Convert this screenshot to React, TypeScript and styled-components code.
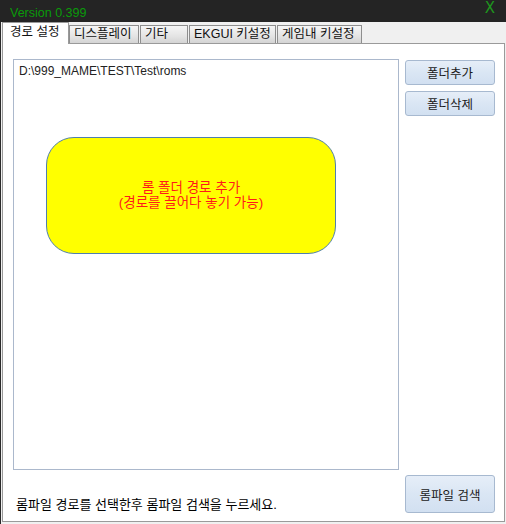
import styled, { createGlobalStyle } from 'styled-components';

const GlobalStyle = createGlobalStyle`
  html, body {
    margin: 0;
    padding: 0;
    background: #f0f0f0;
  }
  body {
    font-family: "Liberation Sans", "Noto Sans CJK KR", sans-serif;
    font-size: 12px;
  }
`;

const Window = styled.div`
  width: 506px;
  height: 524px;
  box-sizing: border-box;
  display: flex;
  flex-direction: column;
  background: #f0f0f0;
  border-left: 1px solid #2a2a2a;
`;

const TitleBar = styled.div`
  height: 22px;
  flex: none;
  display: flex;
  align-items: flex-start;
  justify-content: space-between;
  background: #242424;
  padding: 0 10px 0 10px;
  margin-left: -1px;
  color: #0a9a0a;
`;

const Version = styled.span`
  font-size: 12.5px;
  line-height: 14px;
  padding-top: 6px;
`;

const CloseX = styled.span`
  font-size: 15px;
  line-height: 15px;
  font-family: "DejaVu Sans", sans-serif;
  padding-top: 1px;
  margin-right: 1px;
  color: #1e961e;
`;

const TabStrip = styled.div`
  height: 21px;
  flex: none;
  display: flex;
  align-items: flex-end;
  gap: 1px;
  padding-left: 1px;
  position: relative;
  z-index: 1;
`;

const Tab = styled.div<{ $w: number; $active?: boolean }>`
  width: ${(p) => p.$w}px;
  box-sizing: border-box;
  white-space: nowrap;
  overflow: hidden;
  font-size: 12.5px;
  color: #111;
  padding-left: ${(p) => (p.$active ? 7 : 4)}px;
  ${(p) =>
    p.$active
      ? `
    height: 22px;
    margin-bottom: -1px;
    margin-right: -1px;
    background: #ffffff;
    border: 1px solid #9a9a9a;
    border-bottom: none;
    line-height: 19px;
  `
      : `
    height: 18px;
    background: linear-gradient(#f6f6f6, #e4e4e4 60%, #d4d4d4);
    border: 1px solid #8e8e8e;
    border-bottom: none;
    line-height: 16px;
  `}
`;

const Panel = styled.div`
  flex: 1;
  margin: 0 1px 2px 1px;
  background: #ffffff;
  border: 1px solid #9a9a9a;
  padding: 15px 9px 8px 10px;
  display: flex;
  flex-direction: column;
  min-height: 0;
`;

const TopRow = styled.div`
  flex: 1;
  display: flex;
  gap: 6px;
  min-height: 0;
`;

const ListBox = styled.div`
  width: 387px;
  box-sizing: border-box;
  border: 1px solid #abb8cc;
  padding: 4px 5px 3px;
`;

const PathItem = styled.div`
  font-size: 12px;
  line-height: 15px;
  color: #222;
`;

const DropZone = styled.div`
  margin: 58px 0 0 27px;
  width: 290px;
  height: 117px;
  box-sizing: border-box;
  background: #ffff00;
  border: 1px solid #4f7fae;
  border-radius: 28px;
  display: flex;
  flex-direction: column;
  align-items: center;
  justify-content: center;
  color: #ff1a1a;
  font-size: 13.5px;
  line-height: 15px;
  text-align: center;
  padding-bottom: 1px;
`;

const SideColumn = styled.div`
  width: 90px;
  display: flex;
  flex-direction: column;
  gap: 6px;
  padding-top: 1px;
`;

const Button = styled.button<{ $h: number; $fs?: number }>`
  width: 90px;
  height: ${(p) => p.$h}px;
  box-sizing: border-box;
  border: 1px solid #a7b9d0;
  border-radius: 3px;
  background: linear-gradient(#e6eef8, #dae6f4 50%, #d2e0f1);
  font-family: "Liberation Sans", "Noto Sans CJK KR", sans-serif;
  font-size: ${(p) => p.$fs ?? 12.5}px;
  color: #1a1a1a;
  padding: 0;
`;

const BottomRow = styled.div`
  flex: none;
  display: flex;
  justify-content: space-between;
  align-items: flex-end;
  margin-top: 5px;
`;

const Hint = styled.span`
  font-size: 13px;
  line-height: 15px;
  color: #000;
  padding: 0 0 1px 3px;
`;

const tabs = [
  { label: '경로 설정', w: 67, active: true },
  { label: '디스플레이', w: 70 },
  { label: '기타', w: 48 },
  { label: 'EKGUI 키설정', w: 87 },
  { label: '게임내 키설정', w: 85 },
];

export default function App() {
  return (
    <>
      <GlobalStyle />
      <Window>
        <TitleBar>
          <Version>Version 0.399</Version>
          <CloseX>X</CloseX>
        </TitleBar>
        <TabStrip>
          {tabs.map((t) => (
            <Tab key={t.label} $w={t.w} $active={t.active}>
              {t.label}
            </Tab>
          ))}
        </TabStrip>
        <Panel>
          <TopRow>
            <ListBox>
              <PathItem>D:\999_MAME\TEST\Test\roms</PathItem>
              <DropZone>
                <span>롬 폴더 경로 추가</span>
                <span>(경로를 끌어다 놓기 가능)</span>
              </DropZone>
            </ListBox>
            <SideColumn>
              <Button $h={25}>폴더추가</Button>
              <Button $h={25}>폴더삭제</Button>
            </SideColumn>
          </TopRow>
          <BottomRow>
            <Hint>롬파일 경로를 선택한후 롬파일 검색을 누르세요.</Hint>
            <Button $h={38} $fs={12.5}>
              롬파일 검색
            </Button>
          </BottomRow>
        </Panel>
      </Window>
    </>
  );
}
